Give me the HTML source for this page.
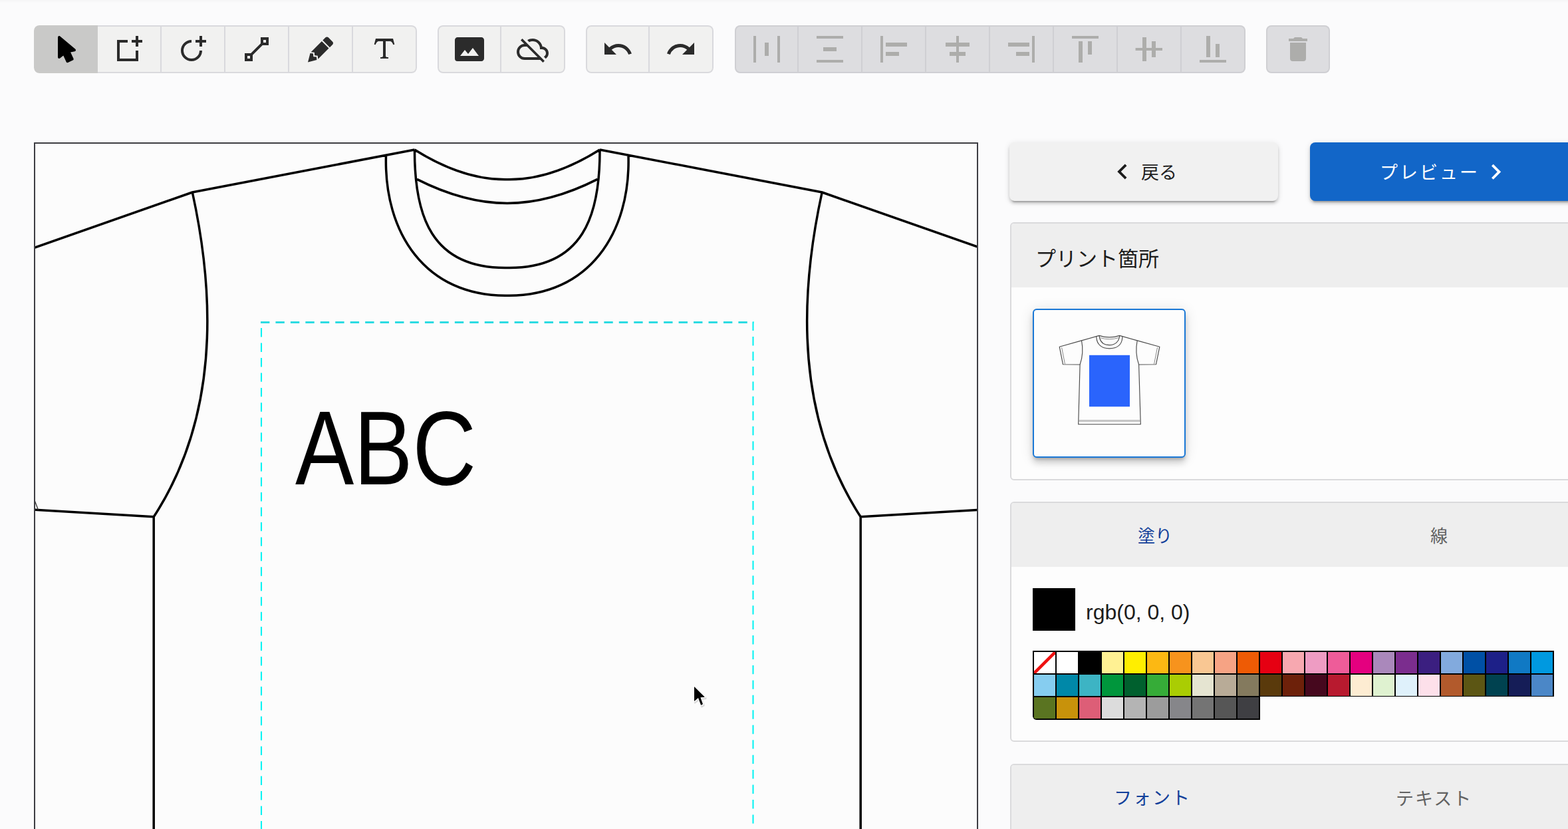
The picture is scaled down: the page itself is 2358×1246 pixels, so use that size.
<!DOCTYPE html>
<html><head><meta charset="utf-8"><title>designer</title>
<style>
*{box-sizing:border-box}
html,body{margin:0;padding:0;overflow:hidden}
body{width:2358px;height:1246px;overflow:hidden;background:#fbfbfc;position:relative;font-family:"Liberation Sans",sans-serif}
.grp{position:absolute;top:38px;height:72px;display:flex;border-radius:8px;overflow:hidden;background:#f1f1f0}
.b{width:96px;height:72px;border:2px solid #d9d9dd;border-left-width:0;display:flex;align-items:center;justify-content:center}
.b:first-child{border-left-width:2px;border-radius:8px 0 0 8px}
.b:last-child{border-radius:0 8px 8px 0}
.b:only-child{border-radius:8px}
.b svg{fill:#2b2b2b;display:block}
.b.act{background:#c9c9c8;border-color:#c9c9c8}
.b.act svg{fill:#000}
.dis{background:#dddde0}
.dis .b{border-color:#cfcfd3}
.dis .b svg{fill:#adadab}
.abs{position:absolute}
.btn{position:absolute;top:214px;height:88px;border-radius:8px;box-shadow:0 6px 2px -4px rgba(0,0,0,.2),0 4px 4px 0 rgba(0,0,0,.14),0 2px 10px 0 rgba(0,0,0,.12)}
.card{position:absolute;left:1519px;width:880px;border:2px solid #dadadc;border-radius:6px;background:#fdfdfd;overflow:hidden}
.card .hd{background:#eeeeee;width:100%}
.pal{position:absolute;left:1553px;top:978px;}
.pr{display:flex;border:1px solid #000;border-bottom-width:0;width:784px;background:#000}
.pr+.pr{border-top-width:0}
.pr.last{width:342px;border-bottom-width:1px;border-radius:0 0 0 6px;overflow:hidden}
.pr i{display:block;width:34px;height:34px;border:1px solid #000}
</style></head>
<body>
<div class="abs" style="left:0;top:0;width:2358px;height:4px;background:linear-gradient(rgba(0,0,30,.028),rgba(0,0,30,0))"></div>
<div class="grp" style="left:51px;width:576px"><div class="b act"><svg viewBox="0 0 24 24" width="48" height="48"><path d="M13.64 21.97a.99.99 0 0 1-1.33-.47l-2.18-4.74-2.51 2.02c-.17.14-.38.22-.62.22a1 1 0 0 1-1-1V3a1 1 0 0 1 1-1c.24 0 .47.09.64.23l.01-.01 11.49 9.64a1.001 1.001 0 0 1-.44 1.75l-3.16.62 2.2 4.73c.26.5.02 1.09-.48 1.32z"/></svg></div><div class="b"><svg viewBox="0 0 24 24" width="48" height="48"><path d="M19 5h3v2h-3v3h-2V7h-3V5h3V2h2zm-2 14v-6h2v8H3V5h8v2H5v12z"/></svg></div><div class="b"><svg viewBox="0 0 24 24" width="48" height="48"><path d="M11 19a6 6 0 0 0 6-6h2a8 8 0 0 1-8 8 8 8 0 0 1-8-8 8 8 0 0 1 8-8v2a6 6 0 0 0-6 6 6 6 0 0 0 6 6m8-14h3v2h-3v3h-2V7h-3V5h3V2h2z"/></svg></div><div class="b"><svg viewBox="0 0 24 24" width="48" height="48"><path d="M15 3v4.59L7.59 15H3v6h6v-4.58L16.42 9H21V3m-4 2h2v2h-2M5 17h2v2H5"/></svg></div><div class="b"><svg viewBox="0 0 24 24" width="48" height="48"><path d="M16.84 2.73c-.39 0-.77.15-1.07.44l-2.12 2.12 5.3 5.31 2.12-2.1c.6-.61.6-1.56 0-2.14L17.9 3.17c-.3-.29-.68-.44-1.06-.44M12.94 6l-8.1 8.11 2.56.28.18 2.29 2.28.17.29 2.56 8.1-8.11m-14 3.74L2.5 21.73l6.7-1.79-.24-2.16-2.31-.17-.18-2.32"/></svg></div><div class="b"><svg viewBox="0 0 24 24" width="48" height="48"><path d="m18.5 4 1.16 4.35-.96.26c-.45-.87-.91-1.74-1.44-2.18C16.73 6 16.11 6 15.5 6H13v10.5c0 .5 0 1 .33 1.25.34.25 1 .25 1.67.25v1H9v-1c.67 0 1.33 0 1.67-.25.33-.25.33-.75.33-1.25V6H8.5c-.61 0-1.23 0-1.76.43-.53.44-.99 1.31-1.44 2.18l-.96-.26L5.5 4z"/></svg></div></div>
<div class="grp" style="left:658px;width:192px"><div class="b"><svg viewBox="0 0 24 24" width="48" height="48"><path d="M21 3H3C2 3 1 4 1 5v14a2 2 0 0 0 2 2h18c1 0 2-1 2-2V5c0-1-1-2-2-2M5 17l3.5-4.5 2.5 3 3.5-4.5 4.5 6z"/></svg></div><div class="b"><svg viewBox="0 0 24 24" width="48" height="48"><path d="M7.73,10L15.73,18H6A4,4 0 0,1 2,14A4,4 0 0,1 6,10M3,5.27L5.75,8C2.56,8.15 0,10.77 0,14A6,6 0 0,0 6,20H17.73L19.73,22L21,20.73L4.27,4M19.35,10.03C18.67,6.59 15.64,4 12,4C10.5,4 9.15,4.43 8,5.17L9.45,6.63C10.21,6.23 11.08,6 12,6A5.5,5.5 0 0,1 17.5,11.5V12H19A3,3 0 0,1 22,15C22,16.13 21.36,17.11 20.44,17.62L21.89,19.07C23.16,18.16 24,16.68 24,15C24,12.36 21.95,10.22 19.35,10.03Z"/></svg></div></div>
<div class="grp" style="left:881px;width:192px"><div class="b"><svg viewBox="0 0 24 24" width="48" height="48"><path d="M12.5 8c-2.65 0-5.05 1-6.9 2.6L2 7v9h9l-3.62-3.62c1.39-1.16 3.16-1.88 5.12-1.88 3.54 0 6.55 2.31 7.6 5.5l2.37-.78C21.08 11.03 17.15 8 12.5 8"/></svg></div><div class="b"><svg viewBox="0 0 24 24" width="48" height="48"><path d="M18.4 10.6C16.55 9 14.15 8 11.5 8c-4.65 0-8.58 3.03-9.96 7.22L3.9 16a8 8 0 0 1 7.6-5.5c1.95 0 3.73.72 5.12 1.88L13 16h9V7z"/></svg></div></div>
<div class="grp dis" style="left:1105px;width:768px"><div class="b"><svg viewBox="0 0 24 24" width="48" height="48"><path d="M4 22H2V2h2zM22 2h-2v20h2zm-8.5 5h-3v10h3z"/></svg></div><div class="b"><svg viewBox="0 0 24 24" width="48" height="48"><path d="M22 2v2H2V2zM7 10.5v3h10v-3zM2 20v2h20v-2z"/></svg></div><div class="b"><svg viewBox="0 0 24 24" width="48" height="48"><path d="M4 22H2V2h2zM22 7H6v3h16zm-6 7H6v3h10z"/></svg></div><div class="b"><svg viewBox="0 0 24 24" width="48" height="48"><path d="M11 2h2v5h8v3h-8v4h5v3h-5v5h-2v-5H6v-3h5v-4H3V7h8z"/></svg></div><div class="b"><svg viewBox="0 0 24 24" width="48" height="48"><path d="M20 2h2v20h-2zM2 10h16V7H2zm6 7h10v-3H8z"/></svg></div><div class="b"><svg viewBox="0 0 24 24" width="48" height="48"><path d="M22 2v2H2V2zM7 22h3V6H7zm7-6h3V6h-3z"/></svg></div><div class="b"><svg viewBox="0 0 24 24" width="48" height="48"><path d="M22 11h-5V6h-3v5h-4V3H7v8H1.8v2H7v8h3v-8h4v5h3v-5h5z"/></svg></div><div class="b"><svg viewBox="0 0 24 24" width="48" height="48"><path d="M22 22H2v-2h20zM10 2H7v16h3zm7 6h-3v10h3z"/></svg></div></div>
<div class="grp dis" style="left:1904px;width:96px"><div class="b"><svg viewBox="0 0 24 24" width="48" height="48"><path d="M19 4h-3.5l-1-1h-5l-1 1H5v2h14M6 19a2 2 0 0 0 2 2h8a2 2 0 0 0 2-2V7H6z"/></svg></div></div>

<!-- canvas -->
<svg class="abs" style="left:0;top:0" width="2358" height="1246" viewBox="0 0 2358 1246">
  <defs><clipPath id="cv"><rect x="53" y="216" width="1416" height="1100"/></clipPath></defs>
  <rect x="52" y="215" width="1418" height="1100" fill="#fcfcfc" stroke="#3d3d42" stroke-width="2"/>
  <g clip-path="url(#cv)">
    <path d="M580.5,234.2 C577.2,349.1 639.1,445.7 762.8,444.2 M945.0,234.2 C948.3,349.1 886.4,445.7 762.8,444.2 M623.5,225.0 C623.1,322.8 647.6,404.1 762.8,402.5 M902.0,225.0 C902.4,322.8 877.9,404.1 762.8,402.5 M289.3,289.0 C325.4,454.1 326.6,630.1 231.2,776.8 M1236.2,289.0 C1200.1,454.1 1198.9,630.1 1294.2,776.8 M623.5,225.0 C664.8,250.9 713.3,270.6 762.8,269.8 M902.0,225.0 C860.7,250.9 812.2,270.6 762.8,269.8 M627.0,269.4 C669.1,290.7 715.2,305.5 762.8,305.5 M898.5,269.4 C856.4,290.7 810.3,305.5 762.8,305.5 M20.0,383.4 L289.3,289.0 L623.5,225.0 M1505.5,383.4 L1236.2,289.0 L902.0,225.0 M231.2,776.8 L20.0,764.3 M1294.2,776.8 L1505.5,764.3 M231.2,776.8 L231.2,1300.0 M1294.2,776.8 L1294.2,1300.0" fill="none" stroke="#000" stroke-width="3.5" stroke-linejoin="round" stroke-linecap="butt"/>
    <path d="M52,752 L57.5,766.5" fill="none" stroke="#333" stroke-width="1.3"/>
    <path d="M392,484.4 H1133.5" fill="none" stroke="#2cdbe2" stroke-width="3" stroke-dasharray="13.4 9.05"/>
    <path d="M1132.5,483.6 V1300" fill="none" stroke="#08f2f2" stroke-width="2.1" stroke-dasharray="13.4 9.05"/>
    <path d="M393,493.1 V1300" fill="none" stroke="#08f2f2" stroke-width="2.1" stroke-dasharray="13.4 9.05"/>
    <text x="444" y="728" font-family="'Liberation Sans', sans-serif" font-size="157" fill="#000" textLength="272" lengthAdjust="spacingAndGlyphs">ABC</text>
  </g>
  <!-- mouse cursor -->
  <g transform="translate(1044,1032)">
    <path d="M0,0 L0,21.9 L6,17 L10.2,27.9 L13,26.3 L9.4,16.2 L15.9,15.65 Z" transform="translate(1.2,2)" fill="#000" opacity=".13" stroke="#000" stroke-width="3" stroke-linejoin="round"/>
    <path d="M0,0 L0,21.9 L6,17 L10.2,27.9 L13,26.3 L9.4,16.2 L15.9,15.65 Z" fill="#fff" stroke="#fff" stroke-width="2.6" stroke-linejoin="round"/>
    <path d="M0,0 L0,21.9 L6,17 L10.2,27.9 L13,26.3 L9.4,16.2 L15.9,15.65 Z" fill="#000"/>
  </g>
</svg>

<!-- right column -->
<div class="btn" style="left:1518px;width:404px;background:#f1f1f1"></div>
<div class="btn" style="left:1970px;width:420px;background:#1266c8"></div>

<div class="card" style="top:334px;height:388px"><div class="hd" style="height:96px"></div></div>
<div class="abs" style="left:1553px;top:464px;width:230px;height:224px;border:2px solid #1a78d6;border-radius:6px;background:#fdfdfd;box-shadow:0 4px 4px -2px rgba(0,0,0,.2),0 8px 10px 0 rgba(0,0,0,.14),0 2px 20px 0 rgba(0,0,0,.12)"></div>

<div class="card" style="top:754px;height:361px"><div class="hd" style="height:96px"></div></div>
<div class="abs" style="left:1553px;top:884px;width:64px;height:64px;background:#000"></div>
<div class="pal"><div class="pr"><i style="background:#fff"><svg width="32" height="32" style="display:block"><line x1="0" y1="32" x2="32" y2="0" stroke="#ee1010" stroke-width="4.6"/></svg></i><i style="background:#ffffff"></i><i style="background:#000000"></i><i style="background:#fff193"></i><i style="background:#ffee00"></i><i style="background:#fcb813"></i><i style="background:#f7931d"></i><i style="background:#f9c793"></i><i style="background:#f6a384"></i><i style="background:#ee5b05"></i><i style="background:#e60012"></i><i style="background:#f7a8b0"></i><i style="background:#ee9cc3"></i><i style="background:#ee5c99"></i><i style="background:#e4007f"></i><i style="background:#aa88bb"></i><i style="background:#7b2d8e"></i><i style="background:#3b1f80"></i><i style="background:#82aadd"></i><i style="background:#0050a5"></i><i style="background:#1d2088"></i><i style="background:#1079c4"></i><i style="background:#0099e0"></i></div><div class="pr"><i style="background:#86cdf0"></i><i style="background:#0088a8"></i><i style="background:#3db4c4"></i><i style="background:#00963c"></i><i style="background:#00602e"></i><i style="background:#36ac38"></i><i style="background:#aacd03"></i><i style="background:#e5e4d1"></i><i style="background:#b8ab97"></i><i style="background:#847a5e"></i><i style="background:#5a3a0c"></i><i style="background:#6d210a"></i><i style="background:#46081e"></i><i style="background:#b81a2f"></i><i style="background:#fdecd2"></i><i style="background:#dff2d0"></i><i style="background:#dff1fb"></i><i style="background:#fde0ea"></i><i style="background:#b25a2c"></i><i style="background:#5c5614"></i><i style="background:#004250"></i><i style="background:#151d57"></i><i style="background:#4b87c7"></i></div><div class="pr last"><i style="background:#5a7421"></i><i style="background:#c8920b"></i><i style="background:#dd5e77"></i><i style="background:#dcdcdc"></i><i style="background:#b4b4b4"></i><i style="background:#9c9c9c"></i><i style="background:#86868a"></i><i style="background:#747474"></i><i style="background:#565656"></i><i style="background:#3f3f43"></i></div></div>

<div class="card" style="top:1148px;height:200px"><div class="hd" style="height:200px"></div></div>

<svg class="abs" style="left:0;top:0;pointer-events:none" width="2358" height="1246" viewBox="0 0 2358 1246">
  <!-- chevrons -->
  <g transform="translate(1664.9,234.9) scale(1.92)"><path d="M15.41 16.58 10.83 12l4.58-4.59L14 6l-6 6 6 6z" fill="#1c1c1c"/></g>
  <g transform="translate(2226.5,235.3) scale(1.92)"><path d="M8.59 16.58 13.17 12 8.59 7.41 10 6l6 6-6 6z" fill="#fff"/></g>
  <g font-family="'Liberation Sans', 'Noto Sans CJK JP', sans-serif">
    <text x="1716" y="269" font-size="27" fill="#1f1f1f">戻る</text>
    <text x="2075" y="269" font-size="27" letter-spacing="3" fill="#ffffff">プレビュー</text>
    <text x="1557" y="400" font-size="31" fill="#1c1c1c">プリント箇所</text>
    <text x="1711" y="815" font-size="26" fill="#12409a">塗り</text>
    <text x="2151" y="815" font-size="26" fill="#626262">線</text>
    <text x="1633" y="930.6" font-size="32" fill="#1c1c1c">rgb(0, 0, 0)</text>
    <text x="1675" y="1209" font-size="27" letter-spacing="2" fill="#12409a">フォント</text>
    <text x="2099" y="1210" font-size="27" letter-spacing="2" fill="#626262">テキスト</text>
  </g>
  <!-- thumbnail tshirt -->
  <g fill="none" stroke="#4a4a4a" stroke-width="1.15" stroke-linejoin="round">
    <path d="M1653,504.4 L1626.5,511.9 L1593.2,521.2 L1598.5,547.7 L1624.1,548 L1621.7,637.7 H1715.3 L1712.6,548 L1738.5,547.7 L1743.9,521.2 L1710.2,511.9 L1683.7,504.4 Q1668.35,509.5 1653,504.4 Z"/>
    <path d="M1648.8,505.8 C1649,518 1657,523.9 1668.35,523.9 C1680,523.9 1687.7,518 1687.9,505.8"/>
    <path d="M1653,504.4 C1654,514 1660,518.6 1668.35,518.6 C1676.5,518.6 1683,514 1683.7,504.4"/>
    <path d="M1654.5,507.6 Q1668.35,512 1682.2,507.6" stroke="#888" stroke-width="1"/>
    <path d="M1626.5,511.9 Q1630.2,531 1624.1,548 M1710.2,511.9 Q1706.5,531 1712.6,548"/>
    <path d="M1596.6,522.2 L1601.6,547.6 M1740.5,522.2 L1735.5,547.6" stroke="#888" stroke-width="1"/>
    <path d="M1621.9,631.8 H1715.1 M1621.9,633.2 H1715.1" stroke="#9a9a9a" stroke-width="0.9"/>
  </g>
  <rect x="1638" y="533.8" width="61" height="77.4" fill="#2a64fc"/>
</svg>
</body></html>
